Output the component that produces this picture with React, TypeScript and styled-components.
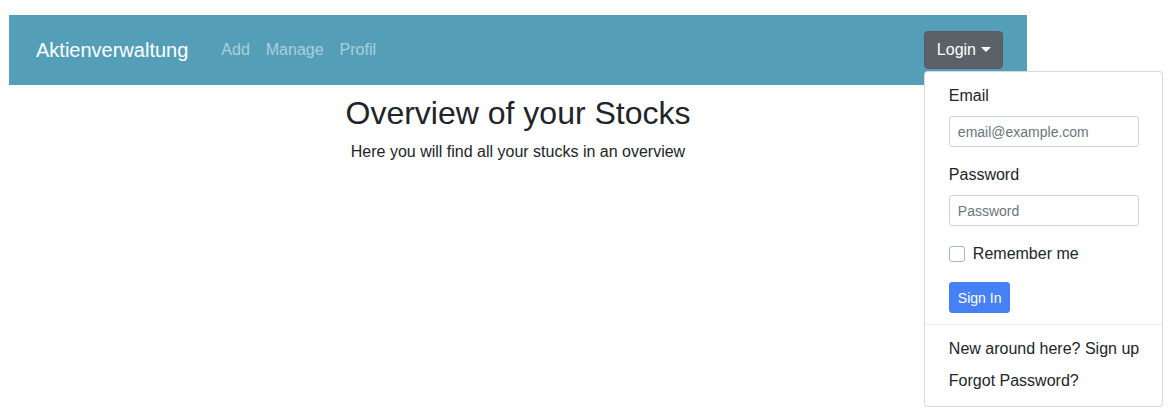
import styled, { createGlobalStyle } from "styled-components";

const GlobalStyle = createGlobalStyle`
  body {
    margin: 0;
    font-family: "Liberation Sans", Arial, sans-serif;
    color: #212529;
    background: #fff;
  }
  * { box-sizing: border-box; }
`;

const Page = styled.div`
  width: 1018px;
  min-height: 402px;
  margin: 15px 0 0 9px;
`;

const Navbar = styled.nav`
  position: relative;
  z-index: 5;
  height: 70px;
  background: #549fb7;
  display: flex;
  align-items: center;
  padding: 0 24px 0 27px;
`;

const Brand = styled.a`
  font-size: 20px;
  color: #fff;
  margin-right: 25px;
`;

const NavLinks = styled.div`
  display: flex;
  flex: 1;
`;

const NavLink = styled.a`
  font-size: 16px;
  color: rgba(255, 255, 255, 0.5);
  padding: 0 8px;
`;

const DropdownWrap = styled.div`
  position: relative;
`;

const LoginButton = styled.button`
  display: flex;
  align-items: center;
  gap: 5px;
  height: 38px;
  padding: 0 11px 0 12px;
  font-family: inherit;
  font-size: 16px;
  color: #fff;
  background: #5a6268;
  border: 1px solid #545b62;
  border-radius: 4px;
`;

const Caret = styled.span`
  width: 0;
  height: 0;
  border-left: 5px solid transparent;
  border-right: 5px solid transparent;
  border-top: 5px solid #fff;
  margin-top: -2px;
`;

const Menu = styled.div`
  position: absolute;
  top: 40px;
  left: 0;
  width: 239px;
  background: #fff;
  border: 1px solid rgba(0, 0, 0, 0.15);
  border-radius: 4px;
  padding: 0 0 9px;
`;

const Form = styled.form`
  padding: 12px 24px 3px;
`;

const Label = styled.label`
  display: block;
  font-size: 16px;
  line-height: 24px;
  margin-bottom: 8px;
`;

const Input = styled.input`
  display: block;
  width: 190px;
  height: 31px;
  padding: 4px 8px;
  font-family: inherit;
  font-size: 14px;
  color: #495057;
  border: 1px solid #ced4da;
  border-radius: 3px;
  margin-bottom: 16px;
  &::placeholder { color: #6c757d; }
`;

const CheckRow = styled.div`
  display: flex;
  align-items: center;
  gap: 8px;
  height: 24px;
  margin-bottom: 16px;
  font-size: 16px;
`;

const CheckBox = styled.span`
  width: 16px;
  height: 16px;
  border: 1px solid #adb5bd;
  border-radius: 3px;
  background: #fff;
`;

const SignIn = styled.button`
  display: block;
  height: 31px;
  padding: 0 8px;
  font-family: inherit;
  font-size: 14px;
  color: #fff;
  background: #4680f5;
  border: 1px solid #4680f5;
  border-radius: 3px;
`;

const Divider = styled.div`
  height: 0;
  border-top: 1px solid #e9ecef;
  margin: 8px 0;
`;

const Item = styled.a`
  display: block;
  padding: 4px 24px;
  font-size: 16px;
  line-height: 24px;
  white-space: nowrap;
  color: #212529;
`;

const Main = styled.main`
  text-align: center;
`;

const Title = styled.h1`
  font-size: 32px;
  font-weight: 400;
  line-height: 38px;
  margin: 9px 0 8px;
`;

const Lead = styled.p`
  font-size: 16px;
  line-height: 24px;
  margin: 0;
`;

export default function App() {
  return (
    <>
      <GlobalStyle />
      <Page>
        <Navbar>
          <Brand>Aktienverwaltung</Brand>
          <NavLinks>
            <NavLink>Add</NavLink>
            <NavLink>Manage</NavLink>
            <NavLink>Profil</NavLink>
          </NavLinks>
          <DropdownWrap>
            <LoginButton type="button">
              Login <Caret />
            </LoginButton>
            <Menu>
              <Form onSubmit={(e) => e.preventDefault()}>
                <Label>Email</Label>
                <Input placeholder="email@example.com" />
                <Label>Password</Label>
                <Input type="password" placeholder="Password" />
                <CheckRow>
                  <CheckBox />
                  Remember me
                </CheckRow>
                <SignIn type="submit">Sign In</SignIn>
              </Form>
              <Divider />
              <Item>New around here? Sign up</Item>
              <Item>Forgot Password?</Item>
            </Menu>
          </DropdownWrap>
        </Navbar>
        <Main>
          <Title>Overview of your Stocks</Title>
          <Lead>Here you will find all your stucks in an overview</Lead>
        </Main>
      </Page>
    </>
  );
}
